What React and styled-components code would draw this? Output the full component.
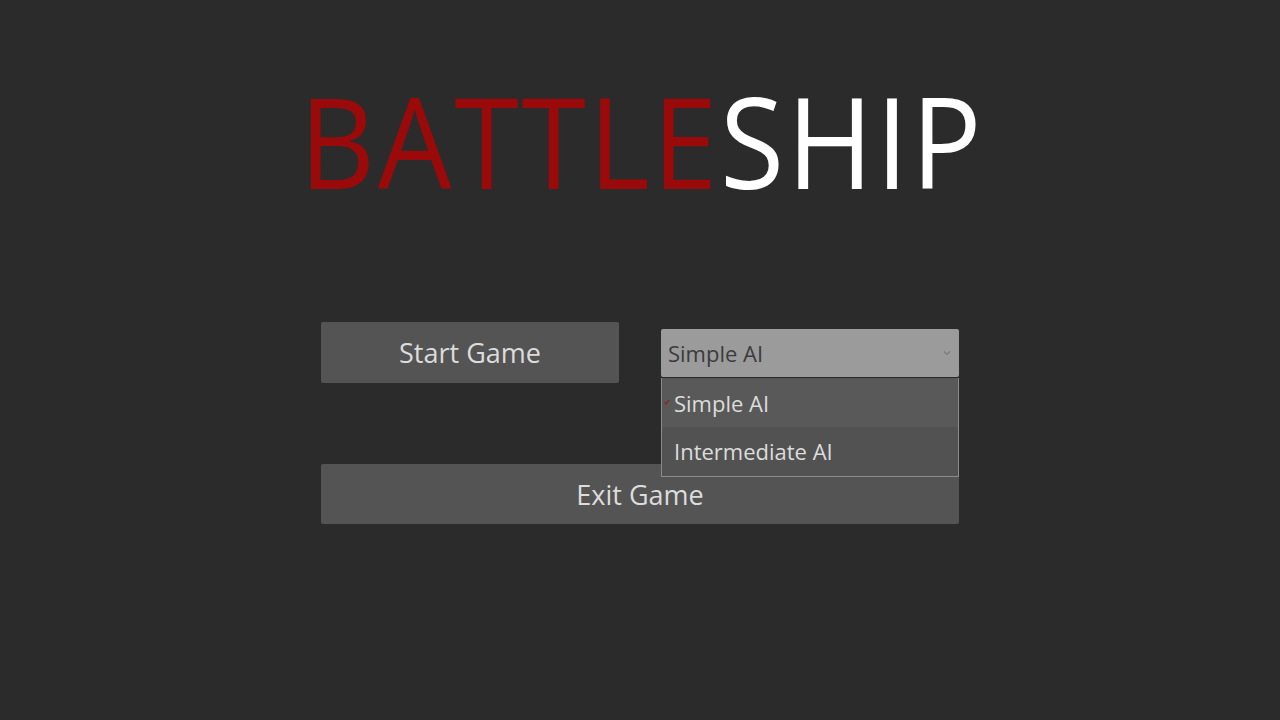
import React, { useState } from "react"
import styled, { createGlobalStyle } from "styled-components"

const GlobalStyle = createGlobalStyle`
  html, body {
    margin: 0;
    padding: 0;
    background: #2b2b2b;
  }
  body {
    font-family: "Open Sans", "Noto Sans", sans-serif;
  }
`

const Screen = styled.div`
  width: 1280px;
  height: 720px;
  display: flex;
  flex-direction: column;
  align-items: center;
  background: #2b2b2b;
  overflow: hidden;
`

const Title = styled.h1`
  margin: 70px 0 0;
  height: 140px;
  font-family: "Open Sans", sans-serif;
  font-weight: 400;
  font-size: 127px;
  line-height: 140px;
  letter-spacing: 3px;
  transform: scaleX(0.92);
  padding-left: 5px;
`

const Red = styled.span`
  color: #9b0a0a;
`

const White = styled.span`
  color: #ffffff;
`

const Menu = styled.div`
  margin-top: 112px;
  display: grid;
  grid-template-columns: 298px 298px;
  column-gap: 42px;
  row-gap: 81px;
  align-items: center;
`

const MenuButton = styled.button`
  height: ${(p) => (p.$wide ? "60px" : "61px")};
  grid-column: ${(p) => (p.$wide ? "1 / span 2" : "auto")};
  background: #545454;
  border: none;
  border-radius: 2px;
  color: #dcdcdc;
  font-family: "Open Sans", sans-serif;
  font-size: 27px;
  padding: 0;
  cursor: pointer;
`

const SelectWrap = styled.div`
  position: relative;
  height: 48px;
`

const SelectBox = styled.div`
  height: 48px;
  box-sizing: border-box;
  background: #9b9b9b;
  border-radius: 2px;
  display: flex;
  align-items: center;
  justify-content: space-between;
  padding: 0 6px 0 7px;
  color: #3c3c3c;
  font-family: "Open Sans", sans-serif;
  font-size: 22px;
  cursor: pointer;
`

const Chevron = styled.svg`
  width: 8px;
  height: 6px;
  margin-right: 2px;
`

const Options = styled.ul`
  position: absolute;
  top: 49px;
  left: 0;
  width: 298px;
  box-sizing: border-box;
  margin: 0;
  padding: 1px 0;
  list-style: none;
  background: #545454;
  border: 1px solid #8a8a8a;
  border-top: none;
  z-index: 2;
`

const Option = styled.li`
  position: relative;
  height: 48px;
  display: flex;
  align-items: center;
  padding-left: 12px;
  background: ${(p) => (p.$active ? "#595959" : "#525252")};
  color: #dcdcdc;
  font-family: "Open Sans", sans-serif;
  font-size: 22px;
`

const Check = styled.svg`
  position: absolute;
  left: 2px;
  top: 20px;
  width: 6px;
  height: 6px;
`

const options = ["Simple AI", "Intermediate AI"]

export default function App() {
  const [selected, setSelected] = useState(0)

  return (
    <Screen>
      <GlobalStyle />
      <Title>
        <Red>BATTLE</Red>
        <White>SHIP</White>
      </Title>
      <Menu>
        <MenuButton>Start Game</MenuButton>
        <SelectWrap>
          <SelectBox>
            {options[selected]}
            <Chevron viewBox="0 0 8 6">
              <path d="M1 1.5 L4 4.5 L7 1.5" fill="none" stroke="#7a7a7a" strokeWidth="1.2" />
            </Chevron>
          </SelectBox>
          <Options>
            {options.map((o, i) => (
              <Option key={o} $active={i === selected} onClick={() => setSelected(i)}>
                {i === selected && (
                  <Check viewBox="0 0 6 6">
                    <path d="M0.5 3 L2 4.8 L5.5 0.8" fill="none" stroke="#8b2020" strokeWidth="1.1" />
                  </Check>
                )}
                {o}
              </Option>
            ))}
          </Options>
        </SelectWrap>
        <MenuButton $wide>Exit Game</MenuButton>
      </Menu>
    </Screen>
  )
}
